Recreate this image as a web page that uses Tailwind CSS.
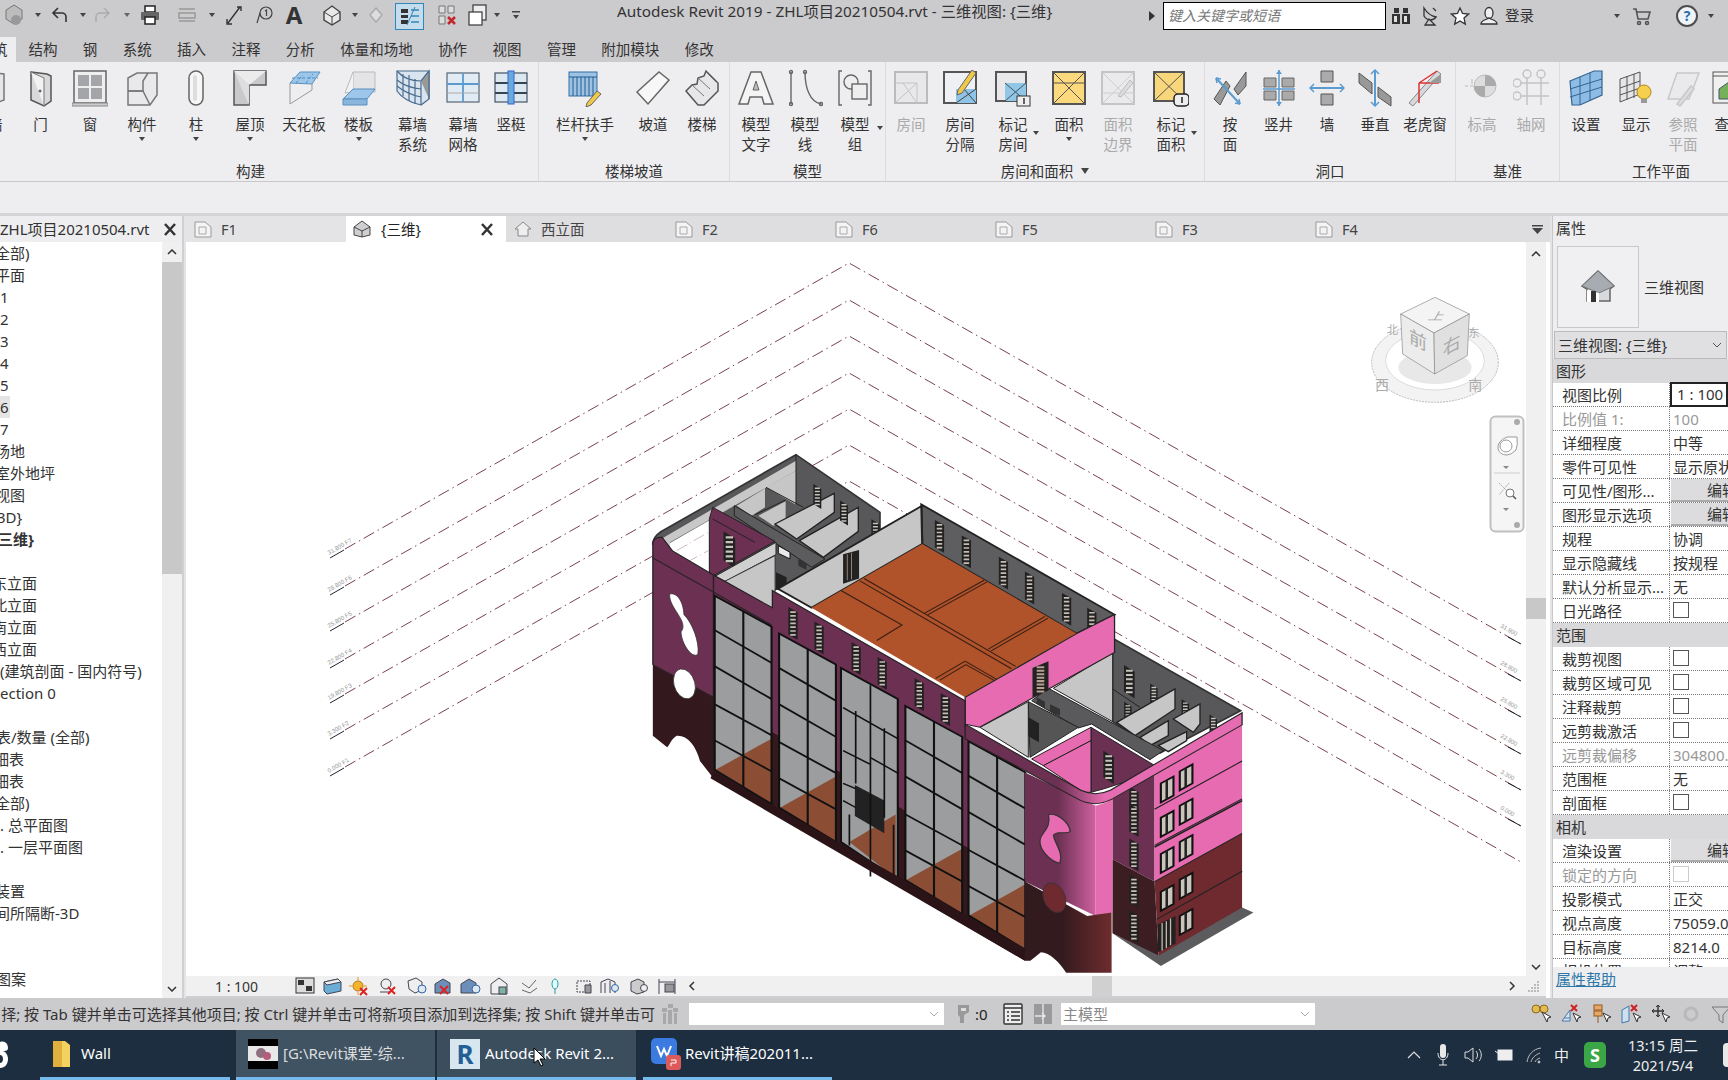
<!DOCTYPE html>
<html lang="zh">
<head>
<meta charset="UTF-8">
<title>Autodesk Revit 2019</title>
<script src="https://cdn.jsdelivr.net/npm/@tailwindcss/browser@4"></script>
</head>
<body class="bg-[#ececee]">
<div class="relative w-[1728px] h-[1080px] overflow-hidden flex flex-col text-[#333] font-['Noto_Sans','Noto_Sans_CJK_SC',sans-serif]">

<svg class="absolute w-0 h-0">
  <defs>
    <linearGradient id="wallG" x1="1040" x2="1150" y1="0" y2="0" gradientUnits="userSpaceOnUse"><stop offset="0" stop-color="#6b3052"/><stop offset="1" stop-color="#e56cb0"/></linearGradient>
    <linearGradient id="baseG" x1="1050" x2="1165" y1="0" y2="0" gradientUnits="userSpaceOnUse"><stop offset="0" stop-color="#331a1e"/><stop offset="1" stop-color="#6d2c2e"/></linearGradient>
    <g id="bay">
      <polygon points="225,455 360,545 360,1060 225,960" fill="#9b9d9f"/>
      <polygon points="228,960 360,870 360,1060" fill="#8c4d35"/>
      <g stroke="#111" stroke-width="5" fill="none">
        <polygon points="225,455 360,545 360,1060 225,960"/>
        <path d="M293 500V1010M225 555L360 650M225 660L360 755M225 770L360 860M225 875L360 965"/>
      </g>
    </g>
    <g id="win"><polygon points="0,0 22,15 22,95 0,80" fill="#222"/><line x1="11" y1="12" x2="11" y2="84" stroke="#c8bdb2" stroke-width="13" stroke-dasharray="5 6"/></g>
    <g id="win2"><polygon points="0,0 30,-20 30,35 0,55" fill="#c9c4bc" stroke="#111" stroke-width="5"/><line x1="14" y1="-10" x2="14" y2="46" stroke="#222" stroke-width="6"/></g>
    <g id="winp"><polygon points="0,0 32,20 32,100 0,80" fill="#222"/><line x1="16" y1="14" x2="16" y2="90" stroke="#c8c4bc" stroke-width="20" stroke-dasharray="6 7"/></g>
    <g id="tabicon"><path d="M1 17V2h10l6 5v10z" fill="#f4f4f4" stroke="#999"/><path d="M5 7h7v7H5z" fill="none" stroke="#aaa"/></g>
  </defs>
</svg>

<!-- title bar + tabs -->
<header class="h-[62px] bg-[#cbcacd] shrink-0">
  <div class="h-[37px] flex items-start">
    <div class="flex items-center h-[30px] shrink-0">
      <svg class="w-5 h-6 ml-1" viewBox="0 0 20 24"><path d="M10 2l8 5v9l-8 5-8-5V7z" fill="#bcbcbc" stroke="#777"/><circle cx="12" cy="17" r="5" fill="#999"/></svg>
      <svg class="w-2 h-2 ml-[10px]" viewBox="0 0 8 8"><path d="M1 2h6L4 6z" fill="#444"/></svg>
      <svg class="w-5 h-5 ml-2" viewBox="0 0 20 20" fill="none" stroke="#333" stroke-width="1.6"><path d="M8 3L3 8l5 5M3 8h9a4 4 0 014 4v5"/></svg>
      <svg class="w-2 h-2 ml-[9px]" viewBox="0 0 8 8"><path d="M1 2h6L4 6z" fill="#444"/></svg>
      <svg class="w-5 h-5 ml-[5px]" viewBox="0 0 20 20" fill="none" stroke="#aaa" stroke-width="1.4"><path d="M12 3l5 5-5 5M17 8H8a4 4 0 00-4 4v5"/></svg>
      <svg class="w-2 h-2 ml-[11px]" viewBox="0 0 8 8"><path d="M1 2h6L4 6z" fill="#666"/></svg>
      <svg class="w-5 h-5 ml-[9px]" viewBox="0 0 20 20"><rect x="5" y="1" width="10" height="6" fill="#fff" stroke="#222" stroke-width="1.5"/><rect x="1" y="7" width="18" height="8" rx="1" fill="#666"/><rect x="5" y="12" width="10" height="7" fill="#fff" stroke="#222" stroke-width="1.5"/></svg>
      <svg class="w-5 h-5 ml-[17px]" viewBox="0 0 20 20" fill="none" stroke="#999" stroke-width="1.5"><path d="M2 4h16M2 16h16"/><rect x="2" y="8" width="16" height="5" fill="#ccc"/></svg>
      <svg class="w-2 h-2 ml-[11px]" viewBox="0 0 8 8"><path d="M1 2h6L4 6z" fill="#444"/></svg>
      <svg class="w-5 h-6 ml-2" viewBox="0 0 20 24" fill="none" stroke="#333" stroke-width="1.4"><path d="M4 20L16 4M13 4h4v4M3 16v5h5"/></svg>
      <svg class="w-5 h-6 ml-[10px]" viewBox="0 0 20 24" fill="none" stroke="#444" stroke-width="1.2"><circle cx="12" cy="10" r="6"/><path d="M6 10L3 20" /><path d="M11 8l1.500-1v6" /></svg>
      <span class="w-5 ml-[10px] text-center text-[24px] leading-[28px] font-bold text-[#333]">A</span>
      <svg class="w-5 h-6 ml-[18px]" viewBox="0 0 20 24"><path d="M10 3l8 6v8l-8 5-8-5V9z" fill="#e8e8e8" stroke="#444" stroke-width="1.4"/><path d="M2 9l8 5 8-5M10 14v8" fill="none" stroke="#444"/></svg>
      <svg class="w-2 h-2 ml-[9px]" viewBox="0 0 8 8"><path d="M1 2h6L4 6z" fill="#444"/></svg>
      <svg class="w-5 h-6 ml-[7px]" viewBox="0 0 20 24"><path d="M10 5l6 7-6 7-6-7z" fill="#ddd" stroke="#aaa" stroke-width="1.4"/></svg>
      <div class="w-[29px] h-[27px] ml-[9px] mt-[2px] bg-[#c5dcec] border border-[#2f86b8] flex items-center justify-center">
        <svg class="w-[22px] h-5" viewBox="0 0 22 20"><path d="M2 3h7v4H2zM2 9h7v3H2zM2 14h7v4H2z" fill="#333"/><path d="M12 4h8M12 10h8M12 16h8" stroke="#2f86b8" stroke-width="1.600"/><path d="M16 1L8 19" stroke="#2f86b8"/></svg>
      </div>
      <svg class="w-5 h-6 ml-[13px]" viewBox="0 0 20 24"><path d="M2 3h6v7H2zM11 3h6v7h-6zM2 13h6v8H2z" fill="#ddd" stroke="#777"/><path d="M11 14l7 7M18 14l-7 7" stroke="#c4262e" stroke-width="2.500"/></svg>
      <svg class="w-5 h-6 ml-[11px]" viewBox="0 0 20 24"><rect x="5" y="2" width="13" height="15" fill="#eee" stroke="#444" stroke-width="1.3"/><rect x="1" y="9" width="13" height="13" fill="#fff" stroke="#444" stroke-width="1.3"/></svg>
      <svg class="w-2 h-2 ml-[5px]" viewBox="0 0 8 8"><path d="M1 2h6L4 6z" fill="#444"/></svg>
      <svg class="w-2 h-3 ml-[11px]" viewBox="0 0 8 12"><path d="M0 2h8v1.500H0zM1 6h6L4 10z" fill="#444"/></svg>
    </div>
    <span class="w-[438px] ml-[97px] text-[15.300px] leading-[22px] whitespace-nowrap text-[#333] shrink-0">Autodesk Revit 2019 - ZHL项目20210504.rvt - 三维视图: {三维}</span>
    <svg class="w-[6px] h-[10px] ml-[94px] mt-[11px] shrink-0" viewBox="0 0 6 10"><path d="M0 0l6 5-6 5z" fill="#333"/></svg>
    <div class="w-[223px] h-[28px] ml-2 mt-[2px] bg-white border border-black pl-1 text-[14px] leading-[26px] italic text-[#777] shrink-0">键入关键字或短语</div>
    <div class="flex items-center h-[31px] shrink-0">
      <svg class="w-5 h-5 ml-[5px]" viewBox="0 0 20 20" fill="#333"><path d="M3 2h5v5H3zM12 2h5v5h-5zM1 8h8v10H1zM11 8h8v10h-8z"/><path d="M3 10h3v6H3zM13 10h3v6h-3z" fill="#ddd"/></svg>
      <svg class="w-5 h-5 ml-[9px]" viewBox="0 0 20 20" fill="none" stroke="#333" stroke-width="1.300"><path d="M4 2c3 5 7 8 12 9-3 4-9 4-12-1zM9 13l-4 6h10z"/><path d="M13 2l3 3"/></svg>
      <svg class="w-5 h-5 ml-[10px]" viewBox="0 0 20 20" fill="#fff" stroke="#333" stroke-width="1.300"><path d="M10 2l2.500 5.500 6 .6-4.500 4 1.300 6L10 15l-5.300 3.100 1.300-6-4.500-4 6-.6z"/></svg>
      <svg class="w-5 h-5 ml-[9px]" viewBox="0 0 20 20" fill="#eee" stroke="#333" stroke-width="1.300"><ellipse cx="10" cy="7" rx="4" ry="5.500"/><path d="M2 18c0-4 5-4 8-6 3 2 8 2 8 6z"/></svg>
      <span class="ml-[6px] text-[14.500px] text-[#333]">登录</span>
    </div>
    <svg class="w-2 h-2 ml-[79px] mt-[12px] shrink-0" viewBox="0 0 8 8"><path d="M1 2h6L4 6z" fill="#444"/></svg>
    <svg class="w-5 h-5 ml-[11px] mt-[6px] shrink-0" viewBox="0 0 20 20" fill="none" stroke="#555" stroke-width="1.600"><path d="M1 3h3l2 10h10l2-7H5"/><circle cx="7" cy="17" r="1.500"/><circle cx="15" cy="17" r="1.500"/></svg>
    <div class="w-[22px] h-[22px] ml-[24px] mt-[5px] rounded-full border-2 border-[#4d4d4d] bg-[#eef3f8] text-center text-[14px] leading-[18px] font-bold text-[#2a6fa8] shrink-0">?</div>
    <svg class="w-2 h-2 ml-[9px] mt-[12px] shrink-0" viewBox="0 0 8 8"><path d="M1 2h6L4 6z" fill="#444"/></svg>
  </div>
  <nav class="h-[25px] flex items-center gap-[25.400px] text-[14.500px] leading-[25px] whitespace-nowrap">
    <span class="w-4 h-[25px] -mr-[13px] bg-[#eeeef0] overflow-hidden"><span class="block -ml-[7px]">筑</span></span>
    <span>结构</span><span>钢</span><span>系统</span><span>插入</span><span>注释</span><span>分析</span><span>体量和场地</span><span>协作</span><span>视图</span><span>管理</span><span>附加模块</span><span>修改</span>
  </nav>
</header>

<!-- ribbon -->
<section class="h-[120px] shrink-0 flex bg-[#eeeef0] border-b border-[#c9c9cb] text-[14.500px] leading-5 text-[#333] overflow-hidden">
  <div class="w-[539px] shrink-0 flex flex-col border-r border-[#dcdcde]">
    <div class="h-[100px] flex">
      <div class="w-4 pt-[7px] overflow-hidden"><svg class="w-9 h-[38px] -ml-7" viewBox="0 0 36 38"><path d="M4 9l12-6 16 2v26l-14 5L4 30z" fill="#e6e6e8" stroke="#777" stroke-width="1.500"/></svg><span class="block -ml-3 mt-[7px]">墙</span></div>
      <div class="w-[49px] pt-[7px] flex flex-col items-center"><svg class="w-9 h-[38px]" viewBox="0 0 36 38"><path d="M8 3l16 2 4 2v25l-7 5L8 31z" fill="#d8d8da" stroke="#555" stroke-width="1.500"/><path d="M8 3l13 6v28" fill="#f2f2f2" stroke="#777"/><circle cx="17" cy="22" r="1.500" fill="#666"/></svg><span class="mt-[7px]">门</span></div>
      <div class="w-[50px] pt-[7px] flex flex-col items-center"><svg class="w-9 h-[38px]" viewBox="0 0 36 38"><rect x="2" y="2" width="32" height="32" fill="#eee" stroke="#666" stroke-width="1.500"/><path d="M6 6h11v11H6zM19 6h11v11H19zM6 19h11v11H6zM19 19h11v11H19z" fill="#a4a5a8"/><rect x="0" y="34" width="36" height="3" fill="#ccc" stroke="#888"/></svg><span class="mt-[7px]">窗</span></div>
      <div class="w-[54px] pt-[7px] flex flex-col items-center"><svg class="w-9 h-[38px]" viewBox="0 0 36 38" stroke="#777" stroke-width="1.500"><path d="M4 9l9-5h20v22l-7 10H4z" fill="#e9e9eb"/><path d="M24 4l-5 8v10H4" fill="none"/><path d="M4 22h15l7 14" fill="none"/></svg><span class="mt-[7px]">构件</span><svg class="w-[6px] h-1 mt-[3px]" viewBox="0 0 6 4"><path d="M0 0h6L3 4z" fill="#444"/></svg></div>
      <div class="w-[54px] pt-[7px] flex flex-col items-center"><svg class="w-9 h-[38px]" viewBox="0 0 36 38"><rect x="11" y="2" width="14" height="34" rx="7" fill="#f6f6f6" stroke="#666" stroke-width="1.500"/><rect x="15" y="6" width="4" height="26" rx="2" fill="#ddd"/></svg><span class="mt-[7px]">柱</span><svg class="w-[6px] h-1 mt-[3px]" viewBox="0 0 6 4"><path d="M0 0h6L3 4z" fill="#444"/></svg></div>
      <div class="w-[54px] pt-[7px] flex flex-col items-center"><svg class="w-9 h-[38px]" viewBox="0 0 36 38"><path d="M2 2h32v14H17v20H2z" fill="#c9c9cc" stroke="#555" stroke-width="1.500"/><path d="M2 2h32l-17 14z" fill="#ececec"/><path d="M2 2l15 14v20z" fill="#dedee0"/></svg><span class="mt-[7px]">屋顶</span><svg class="w-[6px] h-1 mt-[3px]" viewBox="0 0 6 4"><path d="M0 0h6L3 4z" fill="#444"/></svg></div>
      <div class="w-[54px] pt-[7px] flex flex-col items-center"><svg class="w-9 h-[38px]" viewBox="0 0 36 38"><path d="M4 14L14 3h20l-8 12z" fill="#9cc6ea" stroke="#5a8fbe"/><path d="M10 14l7-8M20 14l7-9M6 9h26" stroke="#4f8cc4" stroke-dasharray="3 2"/><path d="M4 14v21M26 15v6L4 35" fill="none" stroke="#999"/></svg><span class="mt-[7px] whitespace-nowrap">天花板</span></div>
      <div class="w-[55px] pt-[7px] flex flex-col items-center"><svg class="w-9 h-[38px]" viewBox="0 0 36 38"><path d="M12 3h22v20H12z" fill="#e4e4e6" stroke="#bbb"/><path d="M12 3L4 24l8-1" fill="#f2f2f2" stroke="#bbb"/><path d="M2 30l10-10h22l-8 10z" fill="#9cc6ea" stroke="#5a8fbe"/><path d="M2 30h24v6H2z" fill="#8ab5dd" stroke="#5a8fbe"/></svg><span class="mt-[7px]">楼板</span><svg class="w-[6px] h-1 mt-[3px]" viewBox="0 0 6 4"><path d="M0 0h6L3 4z" fill="#444"/></svg></div>
      <div class="w-[53px] pt-[7px] flex flex-col items-center"><svg class="w-9 h-[38px]" viewBox="0 0 36 38" fill="none" stroke="#4a6c8c" stroke-width="1.200"><path d="M2 2h32v28l-8 6C15 34 6 28 2 22z" fill="#d8e4ef"/><path d="M2 11c6 5 14 8 24 9M2 2c5 6 14 10 24 10l8-10M26 12v24M14 6v26M8 5v22M20 10v25M2 17c6 5 14 9 24 11"/><path d="M26 12l8-10v28" fill="#999"/></svg><span class="mt-[7px]">幕墙</span><span>系统</span></div>
      <div class="w-[48px] pt-[7px] flex flex-col items-center"><svg class="w-9 h-[38px]" viewBox="0 0 36 38"><rect x="2" y="4" width="32" height="29" fill="#e0ebf4" stroke="#567" stroke-width="1.200"/><path d="M2 15h32M18 4v29" stroke="#5b9bd0" stroke-width="1.800"/><path d="M2 24h32" stroke="#aaa"/></svg><span class="mt-[7px]">幕墙</span><span>网格</span></div>
      <div class="w-[48px] pt-[7px] flex flex-col items-center"><svg class="w-9 h-[38px]" viewBox="0 0 36 38"><rect x="2" y="4" width="32" height="29" fill="#dce7f0" stroke="#456" stroke-width="1.200"/><path d="M2 14h32M2 24h32" stroke="#345" stroke-width="2"/><rect x="15" y="2" width="6" height="33" fill="#6aa9dc" stroke="#36c"/></svg><span class="mt-[7px]">竖梃</span></div>
    </div>
    <div class="pl-[236px]">构建</div>
  </div>

  <div class="w-[191px] shrink-0 flex flex-col border-r border-[#dcdcde]">
    <div class="h-[100px] flex pl-[6px]">
      <div class="w-[80px] pt-[7px] flex flex-col items-center"><svg class="w-9 h-[38px]" viewBox="0 0 36 38"><rect x="2" y="3" width="28" height="24" fill="#9fc2e0" stroke="#2f6ea5"/><path d="M2 8h28M6 8v19M10 8v19M14 8v19M18 8v19M22 8v19M26 8v19" stroke="#1f5d96"/><path d="M20 34l10-12 4 3-10 11-5 2z" fill="#f0c84a" stroke="#666"/></svg><span class="mt-[7px]">栏杆扶手</span><svg class="w-[6px] h-1 mt-[3px]" viewBox="0 0 6 4"><path d="M0 0h6L3 4z" fill="#444"/></svg></div>
      <div class="w-[56px] pt-[7px] flex flex-col items-center"><svg class="w-9 h-[38px]" viewBox="0 0 36 38"><path d="M2 23L24 3l10 8-21 24z" fill="#f7f7f7" stroke="#666" stroke-width="1.500"/></svg><span class="mt-[7px]">坡道</span></div>
      <div class="w-[42px] pt-[7px] flex flex-col items-center"><svg class="w-9 h-[38px]" viewBox="0 0 36 38"><path d="M2 22l6-6 5-1 1-6 6-2 2-5 12 12v8L20 36h-6z" fill="#e7e7e9" stroke="#555" stroke-width="1.500"/><path d="M8 16l12 11M14 9l12 11M22 3l10 10" stroke="#777"/></svg><span class="mt-[7px]">楼梯</span></div>
    </div>
    <div class="text-center">楼梯坡道</div>
  </div>

  <div class="w-[156px] shrink-0 flex flex-col border-r border-[#dcdcde]">
    <div class="h-[100px] flex pl-[2px]">
      <div class="w-[48px] pt-[7px] flex flex-col items-center"><svg class="w-9 h-[38px]" viewBox="0 0 36 38"><path d="M13 3h10l12 32H26l-2-7H12l-2 7H1z" fill="#f4f4f4" stroke="#666" stroke-width="1.500"/><path d="M15 21h6l-3-9z" fill="#bbb" stroke="#666"/></svg><span class="mt-[7px]">模型</span><span>文字</span></div>
      <div class="w-[50px] pt-[7px] flex flex-col items-center"><svg class="w-9 h-[38px]" viewBox="0 0 36 38" fill="none" stroke="#666" stroke-width="1.400"><path d="M4 3v32M18 3c0 16 5 30 16 32"/><circle cx="4" cy="3" r="1.500"/><circle cx="4" cy="35" r="1.500"/><circle cx="18" cy="3" r="1.500"/><circle cx="34" cy="35" r="1.500"/></svg><span class="mt-[7px]">模型</span><span>线</span></div>
      <div class="w-[50px] pt-[7px] flex flex-col items-center"><svg class="w-9 h-[38px]" viewBox="0 0 36 38" fill="#eee" stroke="#666" stroke-width="1.400"><path d="M5 2H2v34h3M31 2h3v34h-3" fill="none"/><circle cx="14" cy="13" r="7"/><rect x="15" y="15" width="15" height="15"/></svg><span class="mt-[7px]">模型</span><span class="relative">组<svg class="absolute -right-[21px] top-[-8px] w-[6px] h-1" viewBox="0 0 6 4"><path d="M0 0h6L3 4z" fill="#444"/></svg></span></div>
    </div>
    <div class="text-center">模型</div>
  </div>

  <div class="w-[319px] shrink-0 flex flex-col border-r border-[#dcdcde]">
    <div class="h-[100px] flex">
      <div class="w-[50px] pt-[7px] flex flex-col items-center text-[#aaa]"><svg class="w-9 h-[38px]" viewBox="0 0 36 38"><rect x="2" y="3" width="32" height="31" fill="#e8e8ea" stroke="#bbb" stroke-width="2"/><path d="M2 14h22v20M2 34l22-20M10 14l14 20" fill="none" stroke="#c4c4c6"/></svg><span class="mt-[7px]">房间</span></div>
      <div class="w-[48px] pt-[7px] flex flex-col items-center"><svg class="w-9 h-[38px]" viewBox="0 0 36 38"><rect x="2" y="3" width="32" height="31" fill="#eef0f3" stroke="#555" stroke-width="2"/><path d="M14 20h20v14H14z" fill="#8fc4e6"/><path d="M14 34l20-14M22 20l12 14" stroke="#444"/><path d="M16 21L30 1l4 3-14 20-5 2z" fill="#f0c84a" stroke="#666"/></svg><span class="mt-[7px]">房间</span><span>分隔</span></div>
      <div class="w-[58px] pt-[7px] flex flex-col items-center"><svg class="w-9 h-[38px]" viewBox="0 0 36 38"><rect x="1" y="3" width="30" height="29" fill="#e8e8ea" stroke="#555" stroke-width="2"/><path d="M10 14h21v18H10z" fill="#92c6e6"/><path d="M10 32l21-18M10 14l21 18" stroke="#456"/><rect x="22" y="27" width="13" height="10" fill="#eee" stroke="#333"/><path d="M29 29v6" stroke="#333" stroke-width="1.500"/></svg><span class="mt-[7px]">标记</span><span class="relative">房间<svg class="absolute -right-[11px] top-[-3px] w-[6px] h-1" viewBox="0 0 6 4"><path d="M0 0h6L3 4z" fill="#444"/></svg></span></div>
      <div class="w-[54px] pt-[7px] flex flex-col items-center"><svg class="w-9 h-[38px]" viewBox="0 0 36 38"><rect x="2" y="3" width="32" height="32" fill="#fbd97c" stroke="#555" stroke-width="2"/><path d="M2 3l32 32M34 3L2 35M2 14h32" stroke="#555" fill="none"/></svg><span class="mt-[7px]">面积</span><svg class="w-[6px] h-1 mt-[3px]" viewBox="0 0 6 4"><path d="M0 0h6L3 4z" fill="#444"/></svg></div>
      <div class="w-[44px] pt-[7px] flex flex-col items-center text-[#aaa]"><svg class="w-9 h-[38px]" viewBox="0 0 36 38"><rect x="2" y="3" width="32" height="32" fill="#eaeaec" stroke="#c4c4c6" stroke-width="2"/><path d="M2 3l32 32M34 3L2 35M2 24h32" stroke="#cdcdcf" fill="none"/><path d="M18 27L30 11l3 3-12 14z" fill="#ddd" stroke="#bbb"/></svg><span class="mt-[7px]">面积</span><span>边界</span></div>
      <div class="w-[62px] pt-[7px] flex flex-col items-center"><svg class="w-9 h-[38px]" viewBox="0 0 36 38"><rect x="1" y="3" width="30" height="29" fill="#f8d67a" stroke="#555" stroke-width="2"/><path d="M1 3l30 29M31 3L1 32" stroke="#555"/><rect x="21" y="25" width="15" height="12" rx="4" fill="#eee" stroke="#222" stroke-width="1.500"/><path d="M29 28v6" stroke="#222" stroke-width="1.500"/></svg><span class="mt-[7px]">标记</span><span class="relative">面积<svg class="absolute -right-[11px] top-[-3px] w-[6px] h-1" viewBox="0 0 6 4"><path d="M0 0h6L3 4z" fill="#444"/></svg></span></div>
    </div>
    <div class="flex justify-center items-center gap-2">房间和面积<svg class="w-2 h-[6px]" viewBox="0 0 8 6"><path d="M0 0h8L4 6z" fill="#444"/></svg></div>
  </div>

  <div class="w-[251px] shrink-0 flex flex-col border-r border-[#dcdcde]">
    <div class="h-[100px] flex">
      <div class="w-[50px] pt-[7px] flex flex-col items-center"><svg class="w-9 h-[38px]" viewBox="0 0 36 38"><path d="M2 30L14 12l4 5L8 36zM22 20L34 3v14L26 26z" fill="#999" stroke="#555"/><path d="M4 9l24 26" stroke="#5b9bd0" stroke-width="2"/><path d="M4 9l5 1M4 9l1 5M28 35l-5-1M28 35l-1-5" stroke="#5b9bd0" stroke-width="1.500"/></svg><span class="mt-[7px]">按</span><span>面</span></div>
      <div class="w-[47px] pt-[7px] flex flex-col items-center"><svg class="w-9 h-[38px]" viewBox="0 0 36 38"><path d="M3 9h12v9H3zM21 9h12v9H21zM3 22h12v9H3zM21 22h12v9H21z" fill="#aaa" stroke="#666"/><path d="M18 1v36M2 20h32" stroke="#5b9bd0" stroke-width="1.500"/><path d="M15 5l3-4 3 4M15 33l3 4 3-4" fill="#5b9bd0"/></svg><span class="mt-[7px]">竖井</span></div>
      <div class="w-[50px] pt-[7px] flex flex-col items-center"><svg class="w-9 h-[38px]" viewBox="0 0 36 38"><path d="M12 2h12v11H12zM12 25h12v11H12z" fill="#aaa" stroke="#555"/><path d="M1 19h34" stroke="#5b9bd0" stroke-width="2"/><path d="M5 15l-4 4 4 4M31 15l4 4-4 4" fill="none" stroke="#5b9bd0" stroke-width="1.500"/></svg><span class="mt-[7px]">墙</span></div>
      <div class="w-[46px] pt-[7px] flex flex-col items-center"><svg class="w-9 h-[38px]" viewBox="0 0 36 38"><path d="M2 4l13 10v11L2 14zM21 18l13 10v9L21 28z" fill="#999" stroke="#555"/><path d="M18 1v36" stroke="#5b9bd0" stroke-width="2"/><path d="M14 5l4-4 4 4M14 33l4 4 4-4" fill="none" stroke="#5b9bd0" stroke-width="1.500"/></svg><span class="mt-[7px]">垂直</span></div>
      <div class="w-[54px] pt-[7px] flex flex-col items-center"><svg class="w-9 h-[38px]" viewBox="0 0 36 38"><path d="M2 34L30 2l4 3L6 37z" fill="#d8d8da" stroke="#888"/><path d="M12 14h20M12 14v20M12 14L30 2" fill="none" stroke="#d33" stroke-width="1.500"/><path d="M22 14L34 5v9z" fill="#999"/></svg><span class="mt-[7px] whitespace-nowrap">老虎窗</span></div>
    </div>
    <div class="text-center">洞口</div>
  </div>

  <div class="w-[104px] shrink-0 flex flex-col border-r border-[#dcdcde]">
    <div class="h-[100px] flex text-[#aaa]">
      <div class="w-[52px] pt-[7px] flex flex-col items-center"><svg class="w-9 h-[38px]" viewBox="0 0 36 38"><path d="M1 17h12" stroke="#bbb" stroke-dasharray="3 2"/><path d="M8 10v5" stroke="#bbb"/><circle cx="21" cy="17" r="11" fill="#ddd" stroke="#bbb"/><path d="M21 6a11 11 0 0111 11H21zM21 28a11 11 0 01-11-11h11z" fill="#aaa"/></svg><span class="mt-[7px]">标高</span></div>
      <div class="w-[46px] pt-[7px] flex flex-col items-center"><svg class="w-9 h-[38px]" viewBox="0 0 36 38" fill="none" stroke="#c4c4c6" stroke-width="1.500"><circle cx="14" cy="5" r="4"/><circle cx="28" cy="5" r="4"/><circle cx="4" cy="14" r="4"/><circle cx="4" cy="27" r="4"/><path d="M14 9v27M28 9v27M8 14h28M8 27h28"/></svg><span class="mt-[7px]">轴网</span></div>
    </div>
    <div class="text-center">基准</div>
  </div>

  <div class="flex-1 flex flex-col">
    <div class="h-[100px] flex">
      <div class="w-[52px] pt-[7px] flex flex-col items-center"><svg class="w-9 h-[38px]" viewBox="0 0 36 38"><path d="M2 12L26 2h8v24L12 36H4z" fill="#8dbde6" stroke="#34648f" stroke-width="1.200"/><path d="M2 20l32-10M2 28l32-10M12 8v28M22 4v28" stroke="#34648f"/></svg><span class="mt-[7px]">设置</span></div>
      <div class="w-[48px] pt-[7px] flex flex-col items-center"><svg class="w-9 h-[38px]" viewBox="0 0 36 38"><path d="M2 10L22 3v22L2 33z" fill="#e6e6e8" stroke="#555"/><path d="M2 19l20-7M2 26l20-7M9 7v24M16 5v24" stroke="#555"/><circle cx="26" cy="23" r="7" fill="#f6d04d" stroke="#a98a1e"/><path d="M23 30h6v4h-6z" fill="#999"/></svg><span class="mt-[7px]">显示</span></div>
      <div class="w-[46px] pt-[7px] flex flex-col items-center text-[#aaa]"><svg class="w-9 h-[38px]" viewBox="0 0 36 38" fill="none" stroke="#c8c8ca" stroke-width="1.500"><path d="M12 4h22L24 30H3z" fill="#eaeaec"/><path d="M12 35l14-18 3 3-14 17z" fill="#ddd"/></svg><span class="mt-[7px]">参照</span><span>平面</span></div>
      <div class="w-[46px] pt-[7px] flex flex-col items-center"><svg class="w-9 h-[38px]" viewBox="0 0 36 38"><rect x="2" y="3" width="32" height="31" fill="#f0f0f0" stroke="#555"/><path d="M2 7h32" stroke="#555"/><path d="M8 20l10-7 9 6v11H8z" fill="#76b05a" stroke="#456"/></svg><span class="mt-[7px] whitespace-nowrap">查看</span></div>
    </div>
    <div class="pl-[72px] whitespace-nowrap">工作平面</div>
  </div>
</section>

<div class="h-[34px] shrink-0 bg-[#eeeef0] border-b-[3px] border-[#d4d4d6]"></div>

<!-- main area -->
<main class="flex-1 flex bg-[#e4e4e6] min-h-0">
  <!-- project browser -->
  <aside class="w-[184px] shrink-0 flex flex-col bg-white border-r-2 border-[#d0d0d2] text-[15px] text-[#333]">
    <div class="h-[26px] bg-[#eeeef0] flex items-center whitespace-nowrap overflow-hidden relative">
      <span>ZHL项目20210504.rvt</span>
      <svg class="absolute left-[164px] top-[7px] w-3 h-[13px]" viewBox="0 0 12 13"><path d="M1 1l10 11M11 1L1 12" stroke="#333" stroke-width="2.500"/></svg>
    </div>
    <div class="flex-1 flex min-h-0">
      <ul class="w-[162px] shrink-0 overflow-hidden leading-[22px] whitespace-nowrap">
        <li class="h-[22px]"><span class="block -ml-[5px]">全部)</span></li>
        <li class="h-[22px]"><span class="block -ml-[5px]">平面</span></li>
        <li class="h-[22px]">1</li><li class="h-[22px]">2</li><li class="h-[22px]">3</li><li class="h-[22px]">4</li><li class="h-[22px]">5</li>
        <li class="h-[22px]"><span class="block w-[10px] bg-[#e5e5e5]">6</span></li>
        <li class="h-[22px]">7</li>
        <li class="h-[22px]"><span class="block -ml-[5px]">场地</span></li>
        <li class="h-[22px]"><span class="block -ml-[5px]">室外地坪</span></li>
        <li class="h-[22px]"><span class="block -ml-[5px]">视图</span></li>
        <li class="h-[22px]"><span class="block -ml-[3px]">3D}</span></li>
        <li class="h-[22px] font-bold"><span class="block -ml-[2px]">三维}</span></li>
        <li class="h-[22px]"></li>
        <li class="h-[22px]"><span class="block -ml-[8px]">东立面</span></li>
        <li class="h-[22px]"><span class="block -ml-[8px]">北立面</span></li>
        <li class="h-[22px]"><span class="block -ml-[8px]">南立面</span></li>
        <li class="h-[22px]"><span class="block -ml-[8px]">西立面</span></li>
        <li class="h-[22px]">(建筑剖面 - 国内符号)</li>
        <li class="h-[22px]">ection 0</li>
        <li class="h-[22px]"></li>
        <li class="h-[22px]"><span class="block -ml-[4px]">表/数量 (全部)</span></li>
        <li class="h-[22px]"><span class="block -ml-[6px]">细表</span></li>
        <li class="h-[22px]"><span class="block -ml-[6px]">细表</span></li>
        <li class="h-[22px]"><span class="block -ml-[5px]">全部)</span></li>
        <li class="h-[22px]">. 总平面图</li>
        <li class="h-[22px]">. 一层平面图</li>
        <li class="h-[22px]"></li>
        <li class="h-[22px]"><span class="block -ml-[5px]">装置</span></li>
        <li class="h-[22px]"><span class="block -ml-[5px]">间所隔断-3D</span></li>
        <li class="h-[22px]"></li><li class="h-[22px]"></li>
        <li class="h-[22px]"><span class="block -ml-[4px]">图案</span></li>
      </ul>
      <div class="w-5 flex flex-col items-center bg-[#f0f0f0]">
        <svg class="w-[10px] h-[6px] my-[7px] shrink-0" viewBox="0 0 10 6"><path d="M1 5l4-4 4 4" fill="none" stroke="#333" stroke-width="1.500"/></svg>
        <div class="w-full h-[312px] bg-[#c8c8c8] shrink-0"></div>
        <svg class="w-[10px] h-[6px] mt-auto mb-[6px] shrink-0" viewBox="0 0 10 6"><path d="M1 1l4 4 4-4" fill="none" stroke="#333" stroke-width="1.500"/></svg>
      </div>
    </div>
  </aside>

  <!-- drawing area -->
  <div class="w-[1364px] shrink-0 flex flex-col ml-[2px]">
    <div class="h-[26px] flex shrink-0 text-[14.500px] leading-[26px] bg-[#dedee0] text-[#444] relative">
      <div class="w-[160px] flex items-center pl-2 bg-[#e4e4e6]"><svg class="w-[18px] h-[18px]" viewBox="0 0 18 18"><use href="#tabicon"/></svg><span class="ml-[9px]">F1</span></div>
      <div class="w-[160px] flex items-center pl-[7px] gap-[10px] bg-white text-[#222] relative"><svg class="w-[18px] h-[18px]" viewBox="0 0 18 18"><path d="M9 1l8 6v8l-8 2-8-2V7z" fill="#cfcfd1" stroke="#444"/><path d="M1 7l8 4 8-4M9 11v6" fill="none" stroke="#444"/></svg><span>{三维}</span><svg class="absolute left-[135px] top-[7px] w-3 h-[13px]" viewBox="0 0 12 13"><path d="M1 1l10 11M11 1L1 12" stroke="#333" stroke-width="2.500"/></svg></div>
      <div class="w-[161px] flex items-center pl-2 gap-[9px]"><svg class="w-[18px] h-[18px]" viewBox="0 0 18 18"><path d="M1 9l8-7 8 7h-3v7H4V9z" fill="#eee" stroke="#888"/></svg><span>西立面</span></div>
      <div class="w-[160px] flex items-center pl-2"><svg class="w-[18px] h-[18px]" viewBox="0 0 18 18"><use href="#tabicon"/></svg><span class="ml-[9px]">F2</span></div>
      <div class="w-[160px] flex items-center pl-2"><svg class="w-[18px] h-[18px]" viewBox="0 0 18 18"><use href="#tabicon"/></svg><span class="ml-[9px]">F6</span></div>
      <div class="w-[160px] flex items-center pl-2"><svg class="w-[18px] h-[18px]" viewBox="0 0 18 18"><use href="#tabicon"/></svg><span class="ml-[9px]">F5</span></div>
      <div class="w-[160px] flex items-center pl-2"><svg class="w-[18px] h-[18px]" viewBox="0 0 18 18"><use href="#tabicon"/></svg><span class="ml-[9px]">F3</span></div>
      <div class="w-[160px] flex items-center pl-2"><svg class="w-[18px] h-[18px]" viewBox="0 0 18 18"><use href="#tabicon"/></svg><span class="ml-[9px]">F4</span></div>
      <svg class="absolute right-[7px] top-[8px] w-[11px] h-[11px]" viewBox="0 0 11 11"><path d="M0 1h11v1.500H0zM0 4h11L5.500 10z" fill="#444"/></svg>
    </div>
    <div class="relative flex-1 min-h-0 bg-white">
      <!-- canvas: model and its overlays sit on a free drawing surface -->
      <svg class="absolute left-0 top-0 w-[1340px] h-[732px]" viewBox="186 243 1340 732">
        <g fill="none" stroke="#6a2c3a" stroke-width=".9" stroke-dasharray="12 4 1.500 4">
          <path d="M345 550L849 264L1521 645"/><path d="M345 587L849 301L1521 682"/><path d="M345 623L849 337L1521 718"/><path d="M345 660L849 374L1521 755"/><path d="M345 695L849 410L1521 791"/><path d="M345 731L849 446L1521 827"/><path d="M345 768L849 482L1521 863"/>
        </g>
        <g stroke="#223" stroke-width="1" fill="none">
          <path d="M330 559l14-8M330 596l14-8M330 632l14-8M330 669l14-8M330 704l14-8M330 740l14-8M330 777l14-8M1508 638l13 7M1508 675l13 7M1508 711l13 7M1508 748l13 7M1508 784l13 7M1508 820l13 7"/>
        </g>
        <g fill="#999" font-size="6" font-family="Liberation Sans">
          <text transform="translate(329 556) rotate(-30)">31.800  F7</text>
          <text transform="translate(329 593) rotate(-30)">28.800  F6</text>
          <text transform="translate(329 629) rotate(-30)">25.800  F5</text>
          <text transform="translate(329 666) rotate(-30)">22.800  F4</text>
          <text transform="translate(329 701) rotate(-30)">19.800  F3</text>
          <text transform="translate(329 737) rotate(-30)">3.300  F2</text>
          <text transform="translate(329 774) rotate(-30)">0.000  F1</text>
          <text transform="translate(1500 628) rotate(30)">31.800</text>
          <text transform="translate(1500 665) rotate(30)">28.800</text>
          <text transform="translate(1500 701) rotate(30)">25.800</text>
          <text transform="translate(1500 738) rotate(30)">22.800</text>
          <text transform="translate(1500 774) rotate(30)">3.300</text>
          <text transform="translate(1500 810) rotate(30)">0.000</text>
        </g>

        <!-- rear left block, crop coordinates -->
        <g transform="translate(640 445) scale(.3333)">
          <path d="M38 300Q40 278 60 265L468 32L720 205V300L400 440L210 400L90 320Z" fill="#58585a" stroke="#333" stroke-width="5"/>
          <path d="M58 298Q60 285 75 278L468 50V80L90 295V318Z" fill="#c8c8c8"/>
          <polygon points="90,297 210,228 208,390 90,320" fill="#fff"/>
          <path d="M110 320L205 265M140 355L205 320" stroke="#6a2c3a" stroke-dasharray="36 10 3 10" fill="none"/>
          <polygon points="468,80 468,182 378,130" fill="#c6c6c6"/>
          <polygon points="375,133 375,190 335,215 290,185" fill="#c6c6c6"/>
          <polygon points="437,172 437,228 400,245 355,215" fill="#c6c6c6"/>
          <polygon points="583,148 583,205 470,285 405,240" fill="#c6c6c6" stroke="#222" stroke-width="4"/>
          <polygon points="655,190 655,262 550,340 478,290" fill="#c6c6c6" stroke="#222" stroke-width="4"/>
          <path d="M378 130L490 190M345 212L437 168M468 32V182" stroke="#222" stroke-width="3" fill="none"/>
          <polygon points="283,185 555,345 515,370 283,215" fill="#5c5c5e" stroke="#222" stroke-width="3"/>
          <polygon points="415,305 450,325 450,345 415,328" fill="#e8e8e8" stroke="#111" stroke-width="3"/>
          <polygon points="475,345 500,358 500,378 475,365" fill="#333"/>
          <polygon points="218,190 405,292 220,395 208,385 208,225" fill="#6b3052" stroke="#222" stroke-width="3"/>
          <path d="M218 225L345 295" stroke="#222" stroke-width="3"/>
          <use href="#winp" x="255" y="265" transform="translate(-30 -30) scale(1.100)"/>
          <use href="#winp" x="520" y="120" transform="translate(130 30) scale(.75)"/>
          <use href="#winp" x="600" y="170" transform="translate(150 42) scale(.75)"/>
          <use href="#winp" x="695" y="225" transform="translate(173 57) scale(.75)"/>
          <polygon points="408,335 495,382 410,438" fill="#58585a"/>
          <polygon points="408,385 440,400 440,440 408,435" fill="#222"/>
          <polygon points="408,295 408,332 255,412 225,397" fill="#d0d0d0" stroke="#222" stroke-width="3"/>
          <polygon points="405,335 405,500 255,412" fill="#c6c6c6" stroke="#222" stroke-width="2"/>
        </g>

        <!-- rear right block, crop coordinates -->
        <g transform="translate(960 630) scale(.3333)">
          <polygon points="458,28 842,245 600,372 458,278" fill="#58585a" stroke="#333" stroke-width="5"/>
          <polygon points="458,70 458,278 280,178" fill="#c6c6c6" stroke="#222" stroke-width="3"/>
          <path d="M458 180L540 235" stroke="#222" stroke-width="3"/>
          <use href="#winp" x="492" y="108"/>
          <use href="#winp" x="572" y="155" transform="translate(170 55) scale(.7)"/>
          <use href="#winp" x="492" y="218" transform="translate(148 66) scale(.7)"/>
          <use href="#winp" x="664" y="208" transform="translate(200 65) scale(.7)"/>
          <use href="#winp" x="748" y="255" transform="translate(225 78) scale(.7)"/>
          <polygon points="645,180 645,240 525,320 470,280" fill="#c6c6c6" stroke="#222" stroke-width="4"/>
          <polygon points="720,225 720,285 700,310 640,270" fill="#c6c6c6" stroke="#222" stroke-width="4"/>
          <polygon points="625,275 625,320 570,350 540,325" fill="#c6c6c6" stroke="#222" stroke-width="4"/>
          <polygon points="680,308 680,335 625,368 595,350" fill="#c6c6c6" stroke="#222" stroke-width="4"/>
          <polygon points="265,178 610,365 570,392 395,285 355,297 215,215" fill="#5a5a5c" stroke="#222" stroke-width="3"/>
          <polygon points="230,205 255,218 255,238 230,225" fill="#333"/>
          <polygon points="270,226 300,240 300,260 270,248" fill="#333"/>
          <polygon points="205,218 205,385 60,295" fill="#c6c6c6" stroke="#222" stroke-width="3"/>
          <polygon points="205,218 355,295 210,385" fill="#555" stroke="#222" stroke-width="3"/>
          <polygon points="205,265 237,283 237,340 205,322" fill="#222"/>
          <polygon points="393,295 585,410 585,430 430,480 393,490" fill="#6b3052" stroke="#222" stroke-width="3"/>
          <use href="#winp" x="430" y="365"/>
          <polygon points="393,295 393,335 250,410 215,390" fill="#e76bb0" stroke="#222" stroke-width="3"/>
          <polygon points="393,335 393,490 370,490 250,410" fill="#e76bb0" stroke="#222" stroke-width="3"/>
        </g>

        <g transform="translate(620 440) scale(.4209 .3444)">
          <!-- main room -->
          <polygon points="716,190 1175,510 1085,565 718,305" fill="#5e5e60" stroke="#222" stroke-width="5"/>
          <polygon points="716,195 718,305 455,490 375,435" fill="#c6c6c6" stroke="#222" stroke-width="5"/>
          <polygon points="718,305 1085,565 820,750 455,490" fill="#b0532a"/>
          <g fill="none" stroke="#3d2015" stroke-width="3">
            <path d="M580,405L940,660M570,412L930,667M525,440L670,540L610,585M865,410L725,505M872,415L732,510M1010,515L875,610M1017,520L882,615M820,645L750,695M820,645L905,705M822,655L760,700M822,655L895,705"/>
          </g>
          <use href="#win" x="748" y="235"/><use href="#win" x="812" y="280"/><use href="#win" x="900" y="342"/><use href="#win" x="962" y="385"/><use href="#win" x="1050" y="447"/><use href="#win" x="1110" y="490"/>
          <polygon points="530,335 568,322 568,405 530,420" fill="#222"/><path d="M540 335V410M550 330V408" stroke="#b8a090" stroke-width="2"/>
          <polygon points="1085,565 1175,510 1175,620 855,837 820,828 820,750" fill="#e76bb0" stroke="#222" stroke-width="3"/>
          <polygon points="980,665 1018,645 1018,730 980,750" fill="#222"/><line x1="999" y1="660" x2="999" y2="740" stroke="#b8a090" stroke-width="18" stroke-dasharray="6 4"/>

          <!-- front facade -->
          <polygon points="222,395 362,490 362,440 820,760 820,840 962,968 962,1480 222,965" fill="#6b3052" stroke="#222" stroke-width="3"/>
          <polygon points="222,750 962,1285 962,1515 222,985" fill="#33181e"/>
          <path d="M78 300Q80 285 100 285L125 325L222 395V750L78 655Z" fill="#6b3052" stroke="#222" stroke-width="3"/>
          <path d="M78 345L360 540" stroke="#222" stroke-width="3" fill="none"/>
          <path d="M78 655L222 750V985L190 935C180 890 160 860 135 862C122 870 118 890 112 895L78 862Z" fill="#33181e"/>
          <path d="M118 450C135 445 150 470 152 510C170 530 190 590 185 625C170 640 145 590 145 560C165 530 115 490 118 450Z" fill="#fff" stroke="#333" stroke-width="2"/>
          <ellipse cx="153" cy="711" rx="25" ry="44" transform="rotate(-12 153 711)" fill="#fff" stroke="#333" stroke-width="2"/>
          <use href="#bay"/><use href="#bay" x="153" y="110"/><use href="#bay" x="453" y="320"/><use href="#bay" x="603" y="423"/>
          <!-- entrance bay -->
          <polygon points="525,665 660,755 660,1280 525,1170" fill="#9b9d9f" stroke="#111" stroke-width="5"/>
          <polygon points="545,1170 655,1090 655,1275" fill="#8c4d35"/>
          <polygon points="558,1005 628,1050 628,1145 558,1095" fill="#222"/>
          <path d="M595 715V1270M530 780L660 870M560 790V1000M628 840V1100M595 925L660 970M530 905L595 945M530 1000L560 1015M530 1050L560 1070M545 1090V1180M650 1120V1270" stroke="#111" stroke-width="4" fill="none"/>
          <polygon points="222,965 962,1480 962,1515 215,985" fill="#2b1418"/>
          <use href="#win" x="400" y="488"/><use href="#win" x="462" y="530"/><use href="#win" x="550" y="590"/><use href="#win" x="612" y="633"/><use href="#win" x="700" y="695"/><use href="#win" x="762" y="738"/>

          <!-- side wall -->
          <polygon points="1170,1045 1270,975 1270,1285 1170,1220" fill="#6b3052"/>
          <polygon points="1170,1220 1270,1285 1280,1505 1170,1435" fill="#3b1d22"/>
          <polygon points="1270,975 1478,830 1478,1145 1270,1285" fill="#e76bb0"/>
          <polygon points="1270,1285 1478,1145 1478,1365 1280,1505" fill="#6e2a2e"/>
          <path d="M1270 1075L1478 935M1270 1180L1478 1045M1270 1285L1478 1145M1275 1395L1478 1255" stroke="#222" stroke-width="3"/>
          <path d="M1270 1185L1478 1050" stroke="#222" stroke-width="5"/>
          <polygon points="1170,1435 1285,1530 1505,1375 1478,1360 1280,1500" fill="#5c5c5e"/>
          <use href="#win" x="1210" y="1010"/><use href="#win" x="1210" y="1060"/><use href="#win" x="1210" y="1160"/><use href="#win" x="1210" y="1265"/><use href="#win" x="1210" y="1370"/>
          <use href="#win2" x="1285" y="1000"/><use href="#win2" x="1330" y="965"/><use href="#win2" x="1285" y="1100"/><use href="#win2" x="1330" y="1065"/><use href="#win2" x="1285" y="1205"/><use href="#win2" x="1330" y="1170"/><use href="#win2" x="1285" y="1315"/><use href="#win2" x="1330" y="1280"/><use href="#win2" x="1330" y="1385"/>
          <polygon points="1278,1410 1320,1385 1320,1465 1278,1490" fill="#222"/><path d="M1298 1400V1478M1288 1405V1485M1308 1392V1470" stroke="#c8bdb2" stroke-width="3"/>

          <!-- corner tower -->
          <polygon points="962,968 1130,1065 1130,1385 962,1285" fill="url(#wallG)"/>
          <path d="M1130 1065Q1150 1060 1170 1045V1375L1130 1385Z" fill="#e56cb0"/>
          <path d="M962 1285L1110 1385L1168 1375V1550H1060C1045 1520 1020 1490 1000 1490L975 1515H962Z" fill="url(#baseG)"/>
          <path d="M820 828L1095 1020Q1130 1040 1165 1020L1478 795V830L1170 1045Q1130 1070 1095 1050L820 870Z" fill="url(#wallG)" stroke="#222" stroke-width="3"/>
          <path d="M1018 1090C1040 1085 1068 1115 1070 1140C1055 1150 1040 1135 1030 1150C1030 1170 1055 1200 1045 1232C1020 1225 995 1190 998 1165C1000 1140 1025 1135 1018 1090Z" fill="#e76bb0" stroke="#333" stroke-width="3"/>
          <ellipse cx="1032" cy="1332" rx="26" ry="44" transform="rotate(-15 1032 1332)" fill="#6e2a2e" stroke="#333" stroke-width="2"/>
        </g>

        <!-- view cube -->
        <g transform="translate(1340 270) scale(.3333)" font-family="Noto Sans CJK SC" fill="#aaa">
          <ellipse cx="285" cy="280" rx="190" ry="120" fill="#f3f3f3" stroke="#bbb" stroke-width="3" stroke-dasharray="6 3"/>
          <ellipse cx="285" cy="275" rx="148" ry="88" fill="#fff" stroke="#ccc" stroke-width="2"/>
          <ellipse cx="285" cy="295" rx="110" ry="50" fill="#e8e8e8"/>
          <polygon points="285,85 388,135 282,192 182,135" fill="#f4f4f4" stroke="#888" stroke-width="2"/>
          <polygon points="182,135 282,192 284,315 188,255" fill="#ececec" stroke="#888" stroke-width="2"/>
          <polygon points="388,135 282,192 284,315 382,260" fill="#e0e0e0" stroke="#888" stroke-width="2"/>
          <text font-size="46" transform="translate(262 152) skewX(-30) scale(1 .7)">上</text>
          <text font-size="54" transform="translate(207 218) skewY(28)">前</text>
          <text font-size="54" transform="translate(308 262) skewY(-28)">右</text>
          <text x="140" y="195" font-size="34">北</text>
          <text x="385" y="205" font-size="34">东</text>
          <text x="105" y="362" font-size="42">西</text>
          <text x="385" y="362" font-size="42">南</text>
        </g>

        <!-- navigation bar -->
        <g fill="none" stroke="#bbb">
          <rect x="1490.500" y="417.500" width="33" height="115" rx="5" fill="#f5f5f5" stroke="#c0c0c0" stroke-width="2"/>
          <circle cx="1517" cy="423" r="3" fill="#aaa" stroke="none"/>
          <path d="M1507 438h10q1 8-1 13q-5 5-9 5q-7 0-9-6q-1-8 9-12z" fill="#fff" stroke="#999"/>
          <circle cx="1506" cy="447" r="6" stroke="#999"/>
          <path d="M1503 467h6l-3 3z" fill="#888" stroke="none"/>
          <path d="M1494 474h26" stroke="#ccc"/>
          <path d="M1499 484l12 12M1509 484l-10 12" stroke="#aaa" stroke-dasharray="2 1"/>
          <circle cx="1510" cy="494" r="4" stroke="#777" fill="#fff"/><path d="M1513 497l3 3" stroke="#555" stroke-width="1.500"/>
          <path d="M1503 509h6l-3 3z" fill="#888" stroke="none"/>
          <circle cx="1517" cy="526" r="3" fill="#aaa" stroke="none"/>
        </g>
      </svg>

      <!-- vertical scrollbar -->
      <div class="absolute left-[1340px] top-0 bottom-0 w-5 bg-[#f0f0f0] flex flex-col items-center">
        <svg class="w-[10px] h-[6px] mt-[9px] shrink-0" viewBox="0 0 10 6"><path d="M1 5l4-4 4 4" fill="none" stroke="#333" stroke-width="1.500"/></svg>
        <div class="w-full h-[21px] mt-[341px] bg-[#c8c8c8] shrink-0"></div>
        <svg class="w-[10px] h-[6px] mt-auto mb-[28px] shrink-0" viewBox="0 0 10 6"><path d="M1 1l4 4 4-4" fill="none" stroke="#333" stroke-width="1.500"/></svg>
      </div>

      <!-- view control bar -->
      <div class="absolute left-0 bottom-0 w-[1360px] h-[22px] bg-[#f0f0f0] border-b-2 border-[#cfcfd1] flex items-center text-[14px] text-[#333]">
        <span class="ml-[29px] w-[60px] whitespace-nowrap">1 : 100</span>
        <svg class="w-[450px] h-[22px] -ml-[1px]" viewBox="0 0 450 22" stroke="#445">
          <g transform="translate(-274 0)">
            <rect x="296" y="3" width="18" height="15" fill="#ddd" stroke="#333"/><path d="M298 5h6v5h-6zM306 11h6v5h-6z" fill="#333" stroke="none"/>
            <path d="M324 7l14-3 3 3v9l-14 3-3-3z" fill="#6aaed6"/><path d="M324 7l14-3 3 3-14 3z" fill="#eee"/>
            <circle cx="358" cy="11" r="5" fill="#f5b52a" stroke="#b5781a"/><path d="M358 2v3M358 17v3M349 11h3M364 11h3" stroke="#e89a1a"/><path d="M360 13l7 7M367 13l-7 7" stroke="#d22" stroke-width="2"/>
            <circle cx="386" cy="9" r="5" fill="#eee"/><path d="M380 17h10" /><path d="M388 12l7 7M395 12l-7 7" stroke="#d22" stroke-width="2"/>
            <path d="M408 6l8-3 6 4v8l-7 3-6-4z" fill="#eee"/><circle cx="422" cy="14" r="4" fill="#dfe8ee" stroke="#36a"/>
            <path d="M435 9l8-5 7 4v10h-15z" fill="#6b8fb8"/><path d="M440 11l8 8M448 11l-8 8" stroke="#d22" stroke-width="2"/>
            <path d="M461 9l8-5 7 4v10h-15z" fill="#6b8fb8"/><circle cx="476" cy="14" r="4" fill="#dfe8ee" stroke="#36a"/>
            <path d="M491 9l8-6 8 6v10h-16z" fill="#eee"/><rect x="499" y="12" width="7" height="7" fill="#7fb3a0"/>
            <path d="M522 8l7 5 7-8M522 15l8 3 7-5" fill="none" stroke="#666"/>
            <ellipse cx="555" cy="9" rx="3" ry="5" fill="#dff" stroke="#39a"/><path d="M555 14v5" stroke="#39a"/>
            <rect x="577" y="6" width="13" height="11" fill="#eee" stroke-dasharray="2 1"/><path d="M585 10h6v8h-6z" fill="#999"/>
            <path d="M601 18V7l7-3 7 3v11" fill="#eee"/><path d="M605 18V8M610 18V6" /><circle cx="615" cy="13" r="3.500" fill="#dfe8ee" stroke="#36a"/>
            <path d="M631 7l7-3 6 3v10l-7 2-6-3z" fill="#ccc"/><circle cx="644" cy="13" r="3.500" fill="#eee"/>
            <path d="M659 4v15M675 4v15M659 7h16" fill="none"/><rect x="665" y="9" width="9" height="8" fill="#999"/>
          </g>
        </svg>
        <svg class="w-[7px] h-[10px] -ml-[36px]" viewBox="0 0 7 10"><path d="M6 1L2 5l4 4" fill="none" stroke="#333" stroke-width="1.500"/></svg>
        <div class="w-5 h-[20px] ml-[397px] bg-[#d0d0d0]"></div>
        <svg class="w-[7px] h-[10px] ml-[397px]" viewBox="0 0 7 10"><path d="M1 1l4 4-4 4" fill="none" stroke="#333" stroke-width="1.500"/></svg>
        <svg class="w-3 h-3 ml-[12px]" viewBox="0 0 12 12" fill="#bbb"><path d="M9 1h2v2H9zM6 4h2v2H6zM9 4h2v2H9zM3 7h2v2H3zM6 7h2v2H6zM9 7h2v2H9zM0 10h2v2H0zM3 10h2v2H3zM6 10h2v2H6zM9 10h2v2H9z"/></svg>
      </div>
    </div>
  </div>

  <!-- properties -->
  <aside class="w-[176px] shrink-0 ml-[2px] flex flex-col bg-[#eeeef0] border-l border-[#c8c8ca] text-[15px] leading-[24px] whitespace-nowrap overflow-hidden">
    <div class="h-[26px] pl-[3px] shrink-0">属性</div>
    <div class="h-[89px] flex items-center shrink-0 pl-[4px]">
      <div class="w-[82px] h-[82px] bg-[#f0f0f2] border border-[#c8c8ca] flex items-center justify-center shrink-0">
        <svg class="w-9 h-9" viewBox="0 0 36 36"><path d="M18 2L34 17l-4 3v12H7V20l-5-3z" fill="#d8dadd" stroke="#666" stroke-width="1.500"/><path d="M18 2l16 15-15 7L2 17z" fill="#a7abb2" stroke="#777"/><path d="M7 21l12 3v9H7z" fill="#fff"/><rect x="11" y="22" width="5" height="11" fill="#333"/></svg>
      </div>
      <span class="ml-[5px]">三维视图</span>
    </div>
    <div class="h-[28px] mx-[1px] shrink-0 bg-[#e0e0e2] border border-[#bbb] pl-[3px] pr-[4px] flex items-center justify-between"><span>三维视图: {三维}</span><svg class="w-[10px] h-[6px]" viewBox="0 0 10 6"><path d="M1 1l4 4 4-4" fill="none" stroke="#555"/></svg></div>

    <div class="flex-1 min-h-0 overflow-hidden bg-white">
      <div class="h-[24px] bg-[#d9d9db] pl-[3px]">图形</div>
      <div class="flex h-[24px] border-b border-dotted border-[#777]"><span class="w-[117px] pl-[9px] border-r border-dotted border-[#777] shrink-0">视图比例</span><span class="flex-1 bg-white border-2 border-[#222] -my-[1px] pl-[5px] leading-[21px]">1 : 100</span></div>
      <div class="flex h-[24px] border-b border-dotted border-[#777] text-[#999]"><span class="w-[117px] pl-[9px] border-r border-dotted border-[#777] shrink-0">比例值 1:</span><span class="pl-[3px]">100</span></div>
      <div class="flex h-[24px] border-b border-dotted border-[#777]"><span class="w-[117px] pl-[9px] border-r border-dotted border-[#777] shrink-0">详细程度</span><span class="pl-[3px]">中等</span></div>
      <div class="flex h-[24px] border-b border-dotted border-[#777]"><span class="w-[117px] pl-[9px] border-r border-dotted border-[#777] shrink-0">零件可见性</span><span class="pl-[3px]">显示原状态</span></div>
      <div class="flex h-[24px] border-b border-dotted border-[#777]"><span class="w-[117px] pl-[9px] border-r border-dotted border-[#777] shrink-0">可见性/图形...</span><span class="flex-1 ml-[1px] bg-[#dcdcde] border-b-2 border-[#aaa] pl-[36px] leading-[22px]">编辑...</span></div>
      <div class="flex h-[24px] border-b border-dotted border-[#777]"><span class="w-[117px] pl-[9px] border-r border-dotted border-[#777] shrink-0">图形显示选项</span><span class="flex-1 ml-[1px] bg-[#dcdcde] border-b-2 border-[#aaa] pl-[36px] leading-[22px]">编辑...</span></div>
      <div class="flex h-[24px] border-b border-dotted border-[#777]"><span class="w-[117px] pl-[9px] border-r border-dotted border-[#777] shrink-0">规程</span><span class="pl-[3px]">协调</span></div>
      <div class="flex h-[24px] border-b border-dotted border-[#777]"><span class="w-[117px] pl-[9px] border-r border-dotted border-[#777] shrink-0">显示隐藏线</span><span class="pl-[3px]">按规程</span></div>
      <div class="flex h-[24px] border-b border-dotted border-[#777]"><span class="w-[117px] pl-[9px] border-r border-dotted border-[#777] shrink-0">默认分析显示...</span><span class="pl-[3px]">无</span></div>
      <div class="flex h-[24px] border-b border-dotted border-[#777]"><span class="w-[117px] pl-[9px] border-r border-dotted border-[#777] shrink-0">日光路径</span><span class="w-4 h-4 ml-[3px] mt-[3px] border border-[#555]"></span></div>

      <div class="h-[24px] bg-[#d9d9db] pl-[3px]">范围</div>
      <div class="flex h-[24px] border-b border-dotted border-[#777]"><span class="w-[117px] pl-[9px] border-r border-dotted border-[#777] shrink-0">裁剪视图</span><span class="w-4 h-4 ml-[3px] mt-[3px] border border-[#555]"></span></div>
      <div class="flex h-[24px] border-b border-dotted border-[#777]"><span class="w-[117px] pl-[9px] border-r border-dotted border-[#777] shrink-0">裁剪区域可见</span><span class="w-4 h-4 ml-[3px] mt-[3px] border border-[#555]"></span></div>
      <div class="flex h-[24px] border-b border-dotted border-[#777]"><span class="w-[117px] pl-[9px] border-r border-dotted border-[#777] shrink-0">注释裁剪</span><span class="w-4 h-4 ml-[3px] mt-[3px] border border-[#555]"></span></div>
      <div class="flex h-[24px] border-b border-dotted border-[#777]"><span class="w-[117px] pl-[9px] border-r border-dotted border-[#777] shrink-0">远剪裁激活</span><span class="w-4 h-4 ml-[3px] mt-[3px] border border-[#555]"></span></div>
      <div class="flex h-[24px] border-b border-dotted border-[#777] text-[#999]"><span class="w-[117px] pl-[9px] border-r border-dotted border-[#777] shrink-0">远剪裁偏移</span><span class="pl-[3px]">304800.0</span></div>
      <div class="flex h-[24px] border-b border-dotted border-[#777]"><span class="w-[117px] pl-[9px] border-r border-dotted border-[#777] shrink-0">范围框</span><span class="pl-[3px]">无</span></div>
      <div class="flex h-[24px] border-b border-dotted border-[#777]"><span class="w-[117px] pl-[9px] border-r border-dotted border-[#777] shrink-0">剖面框</span><span class="w-4 h-4 ml-[3px] mt-[3px] border border-[#555]"></span></div>

      <div class="h-[24px] bg-[#d9d9db] pl-[3px]">相机</div>
      <div class="flex h-[24px] border-b border-dotted border-[#777]"><span class="w-[117px] pl-[9px] border-r border-dotted border-[#777] shrink-0">渲染设置</span><span class="flex-1 ml-[1px] bg-[#dcdcde] border-b-2 border-[#aaa] pl-[36px] leading-[22px]">编辑...</span></div>
      <div class="flex h-[24px] border-b border-dotted border-[#777] text-[#999]"><span class="w-[117px] pl-[9px] border-r border-dotted border-[#777] shrink-0">锁定的方向</span><span class="w-4 h-4 ml-[3px] mt-[3px] border border-[#ccc]"></span></div>
      <div class="flex h-[24px] border-b border-dotted border-[#777]"><span class="w-[117px] pl-[9px] border-r border-dotted border-[#777] shrink-0">投影模式</span><span class="pl-[3px]">正交</span></div>
      <div class="flex h-[24px] border-b border-dotted border-[#777]"><span class="w-[117px] pl-[9px] border-r border-dotted border-[#777] shrink-0">视点高度</span><span class="pl-[3px]">75059.0</span></div>
      <div class="flex h-[24px] border-b border-dotted border-[#777]"><span class="w-[117px] pl-[9px] border-r border-dotted border-[#777] shrink-0">目标高度</span><span class="pl-[3px]">8214.0</span></div>
      <div class="flex h-[24px]"><span class="w-[117px] pl-[9px] border-r border-dotted border-[#777] shrink-0">相机位置</span><span class="pl-[3px]">调整</span></div>
    </div>
    <div class="h-[31px] shrink-0 pl-[3px] bg-[#eeeef0] text-[#2d78a8] leading-[24px]"><span class="underline">属性帮助</span></div>
  </aside>
</main>

<!-- status bar -->
<footer class="h-[32px] shrink-0 bg-[#cbcacd] flex items-center text-[15px] text-[#333] whitespace-nowrap">
  <div class="w-[655px] overflow-hidden shrink-0 flex justify-end"><span class="shrink-0">择; 按 Tab 键并单击可选择其他项目; 按 Ctrl 键并单击可将新项目添加到选择集; 按 Shift 键并单击可</span></div>
  <svg class="w-5 h-[22px] ml-[5px] shrink-0" viewBox="0 0 20 22" fill="#a8a8aa"><path d="M8 1h5v4H8zM2 5h5v4H2zM13 5h5v4h-5zM3 10h3v11H3zM14 10h3v11h-3zM8 7h4v14H8z"/></svg>
  <div class="w-[255px] h-[22px] ml-[9px] bg-white flex items-center justify-end pr-[5px] shrink-0"><svg class="w-[10px] h-[6px]" viewBox="0 0 10 6"><path d="M1 1l4 4 4-4" fill="none" stroke="#aaa"/></svg></div>
  <svg class="w-4 h-5 ml-[11px] shrink-0" viewBox="0 0 16 20" fill="#999"><path d="M3 1h11v7l-5 3v8H5v-6l-2-2z"/><path d="M6 4h5v3H6z" fill="#ddd"/></svg>
  <span class="ml-[4px] w-[26px] shrink-0 text-[#222]">:0</span>
  <svg class="w-5 h-[22px] ml-[2px] shrink-0" viewBox="0 0 20 22"><rect x="1" y="1" width="18" height="20" rx="1" fill="#eee" stroke="#333" stroke-width="1.400"/><path d="M1 5h18M4 9h2M4 13h2M4 17h2M8 9h9M8 13h9M8 17h9" stroke="#333" stroke-width="1.400"/></svg>
  <svg class="w-5 h-[22px] ml-[10px] shrink-0" viewBox="0 0 20 22"><rect x="1" y="1" width="18" height="20" fill="#9a9a9c"/><path d="M10 1v20M2 13h10M9 10l3 3-3 3" stroke="#e6e6e6" stroke-width="1.400" fill="none"/></svg>
  <div class="w-[254px] h-[22px] ml-[8px] bg-white flex items-center justify-between pl-[2px] pr-[5px] text-[#888] shrink-0"><span>主模型</span><svg class="w-[10px] h-[6px]" viewBox="0 0 10 6"><path d="M1 1l4 4 4-4" fill="none" stroke="#aaa"/></svg></div>
  <div class="flex items-center ml-[216px] gap-[10px] shrink-0">
    <svg class="w-5 h-5" viewBox="0 0 20 20"><circle cx="5" cy="5" r="4" fill="#e3bb50" stroke="#8a6a1e"/><circle cx="13" cy="5" r="4" fill="#e3bb50" stroke="#8a6a1e"/><path d="M11 8l5 10 1-4 3-1z" fill="#fff" stroke="#333"/></svg>
    <svg class="w-5 h-5" viewBox="0 0 20 20"><path d="M1 17L9 6v11zM3 14h6" fill="#d9e6f2" stroke="#47a"/><path d="M10 1l6 6M16 1l-6 6" stroke="#c22" stroke-width="2"/><path d="M12 9l4 9 1-4 3-1z" fill="#fff" stroke="#333"/></svg>
    <svg class="w-5 h-5" viewBox="0 0 20 20"><rect x="3" y="1" width="8" height="5" fill="#e8a868" stroke="#96591f"/><rect x="3" y="7" width="8" height="5" fill="#e8a868" stroke="#96591f"/><path d="M7 12v7" stroke="#96591f"/><path d="M12 9l4 9 1-4 3-1z" fill="#fff" stroke="#333"/></svg>
    <svg class="w-5 h-5" viewBox="0 0 20 20"><path d="M1 6l7-4v15l-7 2z" fill="#cde0f0" stroke="#47a"/><path d="M10 1l6 6M16 1l-6 6" stroke="#c22" stroke-width="2"/><path d="M12 9l4 9 1-4 3-1z" fill="#fff" stroke="#333"/></svg>
    <svg class="w-5 h-5" viewBox="0 0 20 20"><path d="M7 1v12M1 7h12" stroke="#333" stroke-width="1.400"/><path d="M5 3l2-2 2 2M5 11l2 2 2-2M3 5L1 7l2 2M11 5l2 2-2 2" fill="none" stroke="#333"/><path d="M11 9l4 9 1-4 3-1z" fill="#fff" stroke="#333"/></svg>
    <svg class="w-5 h-5" viewBox="0 0 20 20" fill="none" stroke="#b8b8ba" stroke-width="3"><circle cx="10" cy="10" r="6"/></svg>
    <svg class="w-5 h-5 -mr-2" viewBox="0 0 20 20" fill="none" stroke="#777"><path d="M1 3h18l-7 8v8l-4-3v-5z"/></svg>
  </div>
</footer>

<!-- taskbar -->
<div class="h-[50px] shrink-0 bg-[#1c2e3f] flex text-white text-[15px] whitespace-nowrap relative">
  <svg class="w-2 h-[50px] shrink-0" viewBox="0 0 8 50"><path d="M0 12c6-2 8 3 8 6 0 3-3 3-5 3 3 1 5 4 5 8 0 5-3 9-8 9v-5c2 0 3-2 3-4s-1-4-3-4z" fill="#fff"/></svg>
  <div class="w-[190px] ml-[32px] flex items-center border-b-[3px] border-[#76b9ed]"><svg class="w-5 h-7 ml-3" viewBox="0 0 20 28"><path d="M1 1h12l5 4v22H1z" fill="#f3d25f"/><path d="M1 1h9v26H1z" fill="#e0b03e"/></svg><span class="ml-[9px]">Wall</span></div>
  <div class="w-[199px] ml-[6px] flex items-center bg-[#3f5363] border-b-[3px] border-[#76b9ed]"><svg class="w-[30px] h-[30px] ml-3" viewBox="0 0 30 30"><rect width="30" height="30" fill="#000"/><rect y="7" width="30" height="15" fill="#e8e8e8"/><circle cx="13" cy="14" r="5" fill="#8f6f7f"/><circle cx="19" cy="17" r="4" fill="#b45d7d"/></svg><span class="ml-[5px] text-[#ddd]">[G:\Revit课堂-综...</span></div>
  <div class="w-[199px] ml-[2px] flex items-center bg-[#3a4e5e] border-b-[3px] border-[#76b9ed]"><div class="w-[30px] h-[30px] ml-[13px] bg-[#d8e6f0] text-center text-[26px] leading-[30px] font-bold text-[#245e96]">R</div><span class="ml-[5px]">Autodesk Revit 2...</span></div>
  <div class="w-[189px] ml-[7px] flex items-center border-b-[3px] border-[#76b9ed]"><svg class="w-[30px] h-[32px] ml-2" viewBox="0 0 30 32"><rect width="26" height="26" rx="5" fill="#3b7be0"/><path d="M6 8l4 10 3-7 3 7 4-10" fill="none" stroke="#fff" stroke-width="2"/><rect x="15" y="17" width="15" height="15" rx="3" fill="#dd5a5a"/><path d="M20 22h5v3h-5v3" fill="none" stroke="#fff"/></svg><span class="ml-[4px]">Revit讲稿202011...</span></div>
  <svg class="absolute left-[533px] top-[17px] w-[12px] h-[20px]" viewBox="0 0 12 20"><path d="M1 1v15l4-3 3 6 2-1-3-6h5z" fill="#fff" stroke="#000"/></svg>

  <div class="ml-auto flex items-center text-[#eee] shrink-0">
    <svg class="w-[14px] h-2" viewBox="0 0 14 8"><path d="M1 7l6-6 6 6" fill="none" stroke="#ddd" stroke-width="1.200"/></svg>
    <svg class="w-4 h-6 ml-[14px]" viewBox="0 0 16 24"><rect x="5" y="1" width="6" height="14" rx="3" fill="#e8e8e8"/><path d="M3 10c0 9 10 9 10 0M8 17v5M4 22h8" fill="none" stroke="#e8e8e8"/></svg>
    <svg class="w-5 h-5 ml-[12px]" viewBox="0 0 20 20" fill="none" stroke="#ddd"><path d="M2 7h3l5-4v14l-5-4H2z"/><path d="M13 6c2 2 2 6 0 8M16 4c3 3 3 9 0 12"/></svg>
    <svg class="w-5 h-4 ml-[11px]" viewBox="0 0 20 16"><rect x="4" y="3" width="14" height="10" fill="#eee" stroke="#eee"/><path d="M1 4l4 3" stroke="#eee"/></svg>
    <svg class="w-[18px] h-[18px] ml-[11px]" viewBox="0 0 18 18" fill="none" stroke="#bbb"><path d="M2 16C3 9 8 3 16 2M6 16c1-4 4-7 9-9M10 16c1-2 2-3 5-4"/><circle cx="14" cy="16" r="1" fill="#eee"/></svg>
    <span class="ml-[11px] text-[15px]">中</span>
    <div class="w-[22px] h-[26px] ml-[15px] rounded-[5px] bg-[#3aa645] text-center text-[18px] leading-[26px] font-bold text-white">S</div>
    <div class="ml-[18px] w-[78px] text-center text-[14.500px] leading-[20px]"><div>13:15 周二</div><div>2021/5/4</div></div>
    <div class="w-[5px] h-[24px] ml-[21px] bg-[#e8e8e8] rounded-l-sm"></div>
  </div>
</div>
</div>
</body>
</html>
